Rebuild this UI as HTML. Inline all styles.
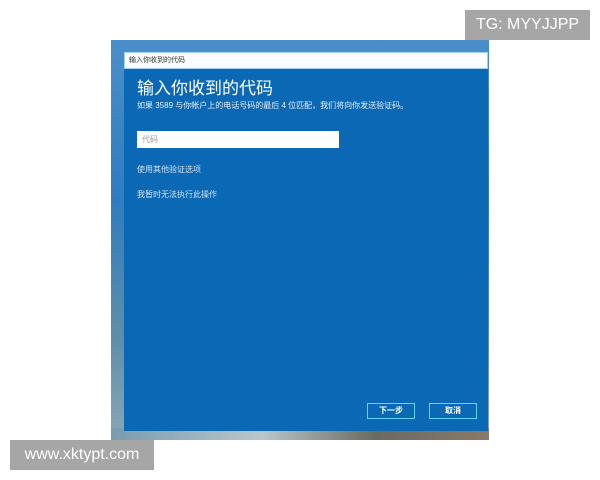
<!DOCTYPE html>
<html><head><meta charset="utf-8"><style>
body{margin:0;width:600px;height:480px;background:#fff;position:relative;overflow:hidden;font-family:"Liberation Sans","Noto Sans CJK SC",sans-serif}
.bg{position:absolute;left:111px;top:40px;width:378px;height:400px;background:linear-gradient(180deg,#4a8fc9 0%,#2f7cc0 40%,#5e8fa8 75%,#8aa7b5 100%)}
.bgbot{position:absolute;left:111px;top:428px;width:378px;height:12px;background:linear-gradient(90deg,#7a9bae,#b9c6cc 40%,#6a6a60 70%,#8a7a6a)}
.dlg{position:absolute;left:124px;top:52px;width:364px;height:379px;background:#0b68b5}
.tb{position:absolute;left:0;top:0;width:364px;height:17px;background:#fbfdfe;border:1px solid #9fd0f0;box-sizing:border-box;font-size:7px;color:#333;line-height:15px;padding-left:4px}
.t{position:absolute;left:13px;top:27px;font-size:17px;line-height:19px;color:#fff}
.s{position:absolute;left:13px;top:49px;font-size:8px;line-height:10px;color:#e6f0fa}
.in{position:absolute;left:13px;top:79px;width:202px;height:17px;background:#fff;font-size:8px;color:#999;line-height:17px;padding-left:5px;box-sizing:border-box}
.l{position:absolute;left:13px;font-size:8px;color:#cfe3f5}
.b{position:absolute;top:351px;width:48px;height:16px;border:1px solid #5fd6f7;box-sizing:border-box;color:#fff;font-size:8px;font-weight:bold;text-align:center;line-height:14px}
.wm{position:absolute;background:#a6a6a6;color:#fff;font-size:16px;text-align:center}
</style></head><body>
<div class="bg"></div><div class="bgbot"></div>
<div class="dlg">
<div class="tb">输入你收到的代码</div>
<div class="t">输入你收到的代码</div>
<div class="s">如果 3589 与你帐户上的电话号码的最后 4 位匹配，我们将向你发送验证码。</div>
<div class="in">代码</div>
<div class="l" style="top:112px">使用其他验证选项</div>
<div class="l" style="top:137px">我暂时无法执行此操作</div>
<div class="b" style="left:243px">下一步</div>
<div class="b" style="left:305px">取消</div>
</div>
<div class="wm" style="left:465px;top:10px;width:125px;height:30px;line-height:30px">TG: MYYJJPP</div>
<div class="wm" style="left:10px;top:440px;width:144px;height:30px;line-height:30px">www.xktypt.com</div>
</body></html>
